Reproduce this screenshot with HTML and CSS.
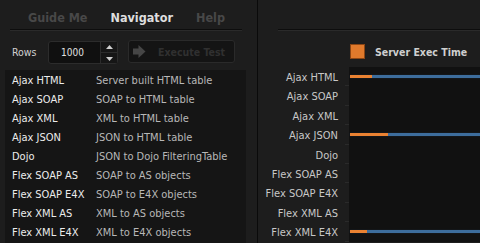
FILE: index.html
```html
<!DOCTYPE html>
<html>

<head>
  <link rel="stylesheet" href="styles.css">
</head>

<body>
  <div class="app">
<!-- left panel -->
    <div class="left">
      <div class="tabs">
        <div class="tab">Guide Me</div>
        <div class="tab active">Navigator</div>
        <div class="tab">Help</div>
      </div>
      <div class="controls">
        <div class="label">Rows</div>
        <div class="stepper">
          <div class="value">1000</div>
          <div class="arrows">
            <div class="arrow"><svg width="7" height="5" viewBox="0 0 7 5"><polygon points="3.5,0 7,4 0,4" fill="#cfcfcf"/></svg></div>
            <div class="arrow"><svg width="7" height="5" viewBox="0 0 7 5"><polygon points="0,1 7,1 3.5,5" fill="#cfcfcf"/></svg></div>
          </div>
        </div>
        <div class="button">
          <svg width="13" height="13" viewBox="0 0 13 13"><rect x="0" y="3.5" width="6" height="6" fill="#464646"/><polygon points="5.5,0 12.5,6.5 5.5,13" fill="#464646"/></svg>
          <span>Execute Test</span>
        </div>
      </div>
      <div class="list">
        <div class="row"><div class="name">Ajax HTML</div><div class="desc">Server built HTML table</div></div>
        <div class="row"><div class="name">Ajax SOAP</div><div class="desc">SOAP to HTML table</div></div>
        <div class="row"><div class="name">Ajax XML</div><div class="desc">XML to HTML table</div></div>
        <div class="row"><div class="name">Ajax JSON</div><div class="desc">JSON to HTML table</div></div>
        <div class="row"><div class="name">Dojo</div><div class="desc">JSON to Dojo FilteringTable</div></div>
        <div class="row"><div class="name">Flex SOAP AS</div><div class="desc">SOAP to AS objects</div></div>
        <div class="row"><div class="name">Flex SOAP E4X</div><div class="desc">SOAP to E4X objects</div></div>
        <div class="row"><div class="name">Flex XML AS</div><div class="desc">XML to AS objects</div></div>
        <div class="row"><div class="name">Flex XML E4X</div><div class="desc">XML to E4X objects</div></div>
      </div>
    </div>
<!-- divider -->
    <div class="divider"></div>
<!-- chart panel -->
    <div class="right">
      <div class="head"></div>
      <div class="legend">
        <div class="swatch"></div>
        <div class="legend-text">Server Exec Time</div>
      </div>
      <div class="chart">
        <div class="crow"><div class="clabel">Ajax HTML</div><div class="tick"></div><div class="plot"><div class="bar"><div class="exec" style="width: 22px;"></div></div></div></div>
        <div class="crow"><div class="clabel">Ajax SOAP</div><div class="tick"></div><div class="plot"></div></div>
        <div class="crow"><div class="clabel">Ajax XML</div><div class="tick"></div><div class="plot"></div></div>
        <div class="crow"><div class="clabel">Ajax JSON</div><div class="tick"></div><div class="plot"><div class="bar"><div class="exec" style="width: 38px;"></div></div></div></div>
        <div class="crow"><div class="clabel">Dojo</div><div class="tick"></div><div class="plot"></div></div>
        <div class="crow"><div class="clabel">Flex SOAP AS</div><div class="tick"></div><div class="plot"></div></div>
        <div class="crow"><div class="clabel">Flex SOAP E4X</div><div class="tick"></div><div class="plot"></div></div>
        <div class="crow"><div class="clabel">Flex XML AS</div><div class="tick"></div><div class="plot"></div></div>
        <div class="crow"><div class="clabel">Flex XML E4X</div><div class="tick"></div><div class="plot"><div class="bar"><div class="exec" style="width: 17px;"></div></div></div></div>
      </div>
    </div>
  </div>
</body>

</html>
```

FILE: styles.css
```css
body {
  margin: 0;
  width: 480px;
  height: 243px;
  overflow: hidden;
  background-color: #1d1d1d;
  font-family: "DejaVu Sans Condensed", "DejaVu Sans", sans-serif;
  font-size: 11px;
}

.app {
  display: flex;
  height: 243px;
}

.left {
  width: 257px;
  display: flex;
  flex-direction: column;
}

/* tabs */
.tabs {
  display: flex;
  gap: 23px;
  height: 19px;
  margin: 0 15px 0 10px;
  padding: 10px 0 0 18px;
  border-bottom: 1px solid #0d0d0d;
  box-shadow: 0 1px 0 #2a2a2a;
}

.tab {
  font-size: 12.5px;
  font-weight: bold;
  line-height: 15px;
  color: #484848;
}

.tab.active {
  color: #dedede;
}

/* rows + execute */
.controls {
  display: flex;
  align-items: flex-start;
  padding: 10px 0 0 12px;
}

.label {
  width: 36px;
  height: 24px;
  line-height: 24px;
  font-size: 10.5px;
  color: #d0d0d0;
}

.stepper {
  display: flex;
  width: 70px;
  height: 23px;
  margin-top: 1px;
  box-sizing: border-box;
  background-color: #101010;
  border: 1px solid #2c2c2c;
  border-radius: 3px;
}

.value {
  flex: 1;
  padding-left: 12px;
  line-height: 21px;
  font-size: 10px;
  color: #e0e0e0;
}

.arrows {
  width: 16px;
  display: flex;
  flex-direction: column;
  border-left: 1px solid #2c2c2c;
  background-color: #161616;
}

.arrow {
  flex: 1;
  display: flex;
  align-items: center;
  justify-content: center;
}

.arrow + .arrow {
  border-top: 1px solid #2c2c2c;
}

.button {
  display: flex;
  align-items: center;
  width: 107px;
  height: 23px;
  margin-left: 10px;
  padding-left: 4px;
  box-sizing: border-box;
  background-color: #141414;
  border: 1px solid #2a2a2a;
  border-radius: 3px;
}

.button span {
  margin-left: 12px;
  font-size: 10.5px;
  font-weight: bold;
  color: #303030;
}

/* test list */
.list {
  flex: 1;
  margin: 6px 11px 0 5px;
  padding-top: 1px;
  background-color: #151515;
}

.row {
  display: flex;
  align-items: center;
  height: 19px;
}

.name {
  width: 84px;
  padding-left: 7px;
  color: #ececec;
}

.desc {
  color: #b8b8b8;
}

.divider {
  width: 1px;
  background-color: #0a0a0a;
}

/* chart */
.right {
  flex: 1;
  display: flex;
  flex-direction: column;
}

.head {
  height: 29px;
  margin-left: 20px;
  border-bottom: 1px solid #0d0d0d;
  box-shadow: 0 1px 0 #2a2a2a;
}

.legend {
  display: flex;
  align-items: center;
  height: 15px;
  margin-top: 14px;
  padding-left: 92px;
}

.swatch {
  width: 15px;
  height: 15px;
  box-sizing: border-box;
  background-color: #e07a2c;
  border: 1px solid #8c4614;
}

.legend-text {
  margin-left: 10px;
  font-size: 10.5px;
  font-weight: bold;
  color: #cfcfcf;
}

.chart {
  flex: 1;
  display: flex;
  flex-direction: column;
  margin-top: 8px;
}

.crow {
  display: flex;
  height: 19.4px;
}

.clabel {
  width: 80px;
  padding-top: 1px;
  line-height: 19.4px;
  text-align: right;
  color: #c8c8c8;
}

.tick {
  width: 4px;
  margin-left: 7px;
  border-bottom: 1px solid #2a2a2a;
  box-sizing: border-box;
}

.plot {
  flex: 1;
  display: flex;
  align-items: center;
  background-color: #111111;
}

.bar {
  flex: 1;
  display: flex;
  height: 3px;
  margin-left: 1px;
  background-color: #3d6d9c;
  box-shadow: 0 0 1px #2a4a6a;
}

.exec {
  background-color: #ea8232;
}
```
